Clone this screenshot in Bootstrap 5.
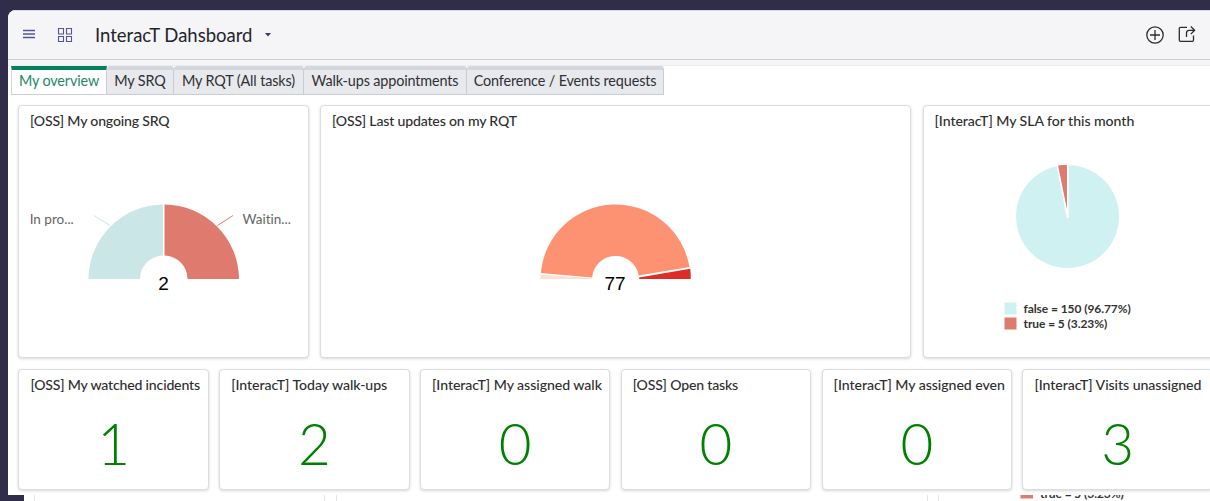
<!DOCTYPE html>
<html lang="en">
<head>
<meta charset="utf-8">
<title>InteracT Dahsboard</title>
<link href="https://cdn.jsdelivr.net/npm/bootstrap@5.3.0/dist/css/bootstrap.min.css" rel="stylesheet">
<style>
body{background:#2f2d4a;font-family:Lato,sans-serif;font-size:14.4px;line-height:20px;color:#2e2e2e;height:501px;overflow:hidden;font-variant-ligatures:none}
.shell{margin:10px 0 0 8px;height:485px;background:#fff;border-top-left-radius:8px;overflow:hidden}
.topbar{height:50px;background:#f5f5f8;border-top:1px solid #d6d7df;border-bottom:1px solid #cfd0d6}
.topbar h1{font-size:18.5px;line-height:24px;margin:0 0 1px 22px;width:158px;white-space:nowrap;color:#24242c}
.burger{margin:-2px 0 0 15px}
.tiles-icon{margin:-1px 0 0 22px}
.caret{margin-left:12px}
.share{margin:-2px 14px 0 14px}
.gapline{height:6px;background:#f5f5f8;border-bottom:1px solid #ebebed}
.tabs{height:29px;padding-left:3px}
.tabs .nav-link{padding:0;border:solid #c9ccd3;border-width:0 1px 1px 0;border-top:4px solid #d3d6dc;border-radius:3px 3px 0 0;background:#e8e9ec;color:#2f3034;height:29px;line-height:21px;text-align:center;font-size:14.4px;letter-spacing:-.13px;white-space:nowrap}
.tabs .nav-link.active{background:#fff;color:#1f8866;border-top-color:#04815d;border-left:1px solid #d3d6dc;border-radius:0}
.w1{width:96px}.w2{width:67px}.w3{width:130px}.w4{width:163px}.w5{width:197px}
.tile{border:1px solid #dcdde0;border-radius:4px;box-shadow:0 1px 3px rgba(0,0,0,.16);background:#fff;flex:none}
.tile h2{font-size:14.1px;line-height:20px;margin:5px 0 0 11px;white-space:nowrap;color:#2e2e2e;letter-spacing:-.04px}
.tile h2.tight{letter-spacing:-.18px}
.big{height:253px}
.b1{width:290.500px}.b2{width:591px}.b3{width:300px}
.big svg{display:block}
.small-tile{width:190.5px;height:121px}
.num{font-size:56.6px;font-weight:300;line-height:60px;color:#008000;text-align:center;margin-top:18px}
.row1{margin:10px 0 0 10px;gap:11.5px}
.row2{margin:11px 0 0 10.4px;gap:10.3px}
.under{height:6px;margin-left:24px;background:#fff;overflow:hidden}
.under svg{display:block}
</style>
</head>
<body>
<main class="shell">
<header class="topbar d-flex align-items-center">
<svg class="burger" width="12" height="10" viewBox="0 0 12 10"><path d="M0 1.500H12M0 5H12M0 8.500H12" stroke="#54569b" stroke-width="1.600"/></svg>
<svg class="tiles-icon" width="16" height="16" viewBox="0 0 16 16" fill="none" stroke="#54529a" stroke-width="1.100"><path d="M1.500 1.500h5v5.500h-5zM9.500 1.500h5v5.500h-5zM1.500 9.500h5v5h-5zM9.500 9.500h5v5h-5z"/></svg>
<h1 class="fw-normal">InteracT Dahsboard</h1>
<svg class="caret" width="6" height="4"><path d="M0 0H6L3 3.600Z" fill="#36367c"/></svg>
<svg class="ms-auto" width="18" height="18" viewBox="0 0 18 18" fill="none" stroke="#2c2c30" stroke-width="1.300"><circle cx="9" cy="9" r="8.200"/><path d="M9 4v10M4 9h10"/></svg>
<svg class="share" width="18" height="18" viewBox="0 0 18 18" fill="none" stroke="#2c2c30" stroke-width="1.300"><path d="M9 2.300H2.500Q1.300 2.300 1.300 3.500V15Q1.300 16.300 2.500 16.300H14.300Q15.500 16.300 15.500 15V10.500M8.500 12V8Q8.500 5.300 11.200 5.300H16.500M12.800 1.500L16.600 5.300 12.800 9.100"/></svg>
</header>
<div class="gapline"></div>
<nav class="nav tabs flex-nowrap">
<a class="nav-link active w1">My overview</a><a class="nav-link w2">My SRQ</a><a class="nav-link w3">My RQT (All tasks)</a><a class="nav-link w4">Walk-ups appointments</a><a class="nav-link w5">Conference / Events requests</a>
</nav>
<section class="d-flex row1">
<article class="tile big b1"><h2 class="tight">[OSS] My ongoing SRQ</h2>
<svg width="288" height="220" viewBox="19 131 288 220" font-family="Lato,sans-serif">
<path d="M88.500 279A75 75 0 0 1 163 204.500V255.500A23.500 23.500 0 0 0 140 279Z" fill="#cbe6e6"/>
<path d="M164.500 204.500A75 75 0 0 1 239 279H187.500A23.500 23.500 0 0 0 164.500 255.500Z" fill="#df7a6f"/>
<path d="M94 215.500L110 225.500" stroke="#cbe6e6"/><path d="M233 215.500L217.500 225.500" stroke="#df7a6f"/>
<text x="29.700" y="223.500" font-size="13.500" fill="#666">In pro...</text><text x="242.500" y="223.500" font-size="13.500" fill="#666">Waitin...</text>
<text x="163.500" y="289.500" font-size="19" fill="#000" text-anchor="middle" font-family="Liberation Sans,sans-serif">2</text></svg>
</article>
<article class="tile big b2"><h2 class="tight">[OSS] Last updates on my RQT</h2>
<svg width="589" height="220" viewBox="321.500 131 589 220">
<path d="M541.300 273A75 75 0 0 1 690 267.100L639.200 275.600A23.500 23.500 0 0 0 592.600 277.500Z" fill="#fd9272"/>
<path d="M541 274.700L592.500 278.200V279H541Z" fill="#fee0d3"/><path d="M639.500 277.400L690.700 268.700Q691.500 274 691.200 279H639.800Z" fill="#de2d26"/>
<text x="615.500" y="289.500" font-size="19" fill="#000" text-anchor="middle" font-family="Liberation Sans,sans-serif">77</text></svg>
</article>
<article class="tile big b3"><h2>[InteracT] My SLA for this month</h2>
<svg width="298" height="220" viewBox="924 131 298 220" font-family="Lato,sans-serif">
<circle cx="1067.500" cy="216.500" r="51.500" fill="#d0f1f2"/>
<path d="M1067.800 218V164L1057 164.500Z" fill="#df7a6f" stroke="#fff" stroke-width="1.700"/>
<path d="M1055 162H1070V164.800Q1063 164.500 1055 166Z" fill="#fff"/>
<path d="M1004.500 302.500h12v12h-12z" fill="#d0f1f2"/><path d="M1004.500 317.500h12v12h-12z" fill="#df7a6f"/>
<g font-size="12" font-weight="700" fill="#333" letter-spacing="-.08"><text x="1023.500" y="313.200">false = 150 (96.77%)</text><text x="1023.500" y="328.200">true = 5 (3.23%)</text></g></svg>
</article>
</section>
<section class="d-flex row2">
<article class="tile small-tile"><h2 class="tight">[OSS] My watched incidents</h2><div class="num">1</div></article>
<article class="tile small-tile"><h2>[InteracT] Today walk-ups</h2><div class="num">2</div></article>
<article class="tile small-tile"><h2>[InteracT] My assigned walk</h2><div class="num">0</div></article>
<article class="tile small-tile"><h2 class="tight">[OSS] Open tasks</h2><div class="num">0</div></article>
<article class="tile small-tile"><h2>[InteracT] My assigned even</h2><div class="num">0</div></article>
<article class="tile small-tile"><h2>[InteracT] Visits unassigned</h2><div class="num">3</div></article>
</section>
</main>
<div class="under"><svg width="1186" height="6" viewBox="24 495 1186 6"><path d="M34.500 495v6M324.500 495v6M336.500 495v6M927.500 495v6M938.500 495v6" stroke="#e4e4e6"/><path d="M1020.500 495h12.500v3.500h-12.500z" fill="#df7a6f"/><text x="1040" y="498.200" font-size="12" font-weight="700" fill="#333" letter-spacing="-.08" font-family="Lato,sans-serif">true = 5 (3.23%)</text></svg></div>
<script src="https://cdn.jsdelivr.net/npm/bootstrap@5.3.0/dist/js/bootstrap.bundle.min.js"></script>
</body>
</html>
